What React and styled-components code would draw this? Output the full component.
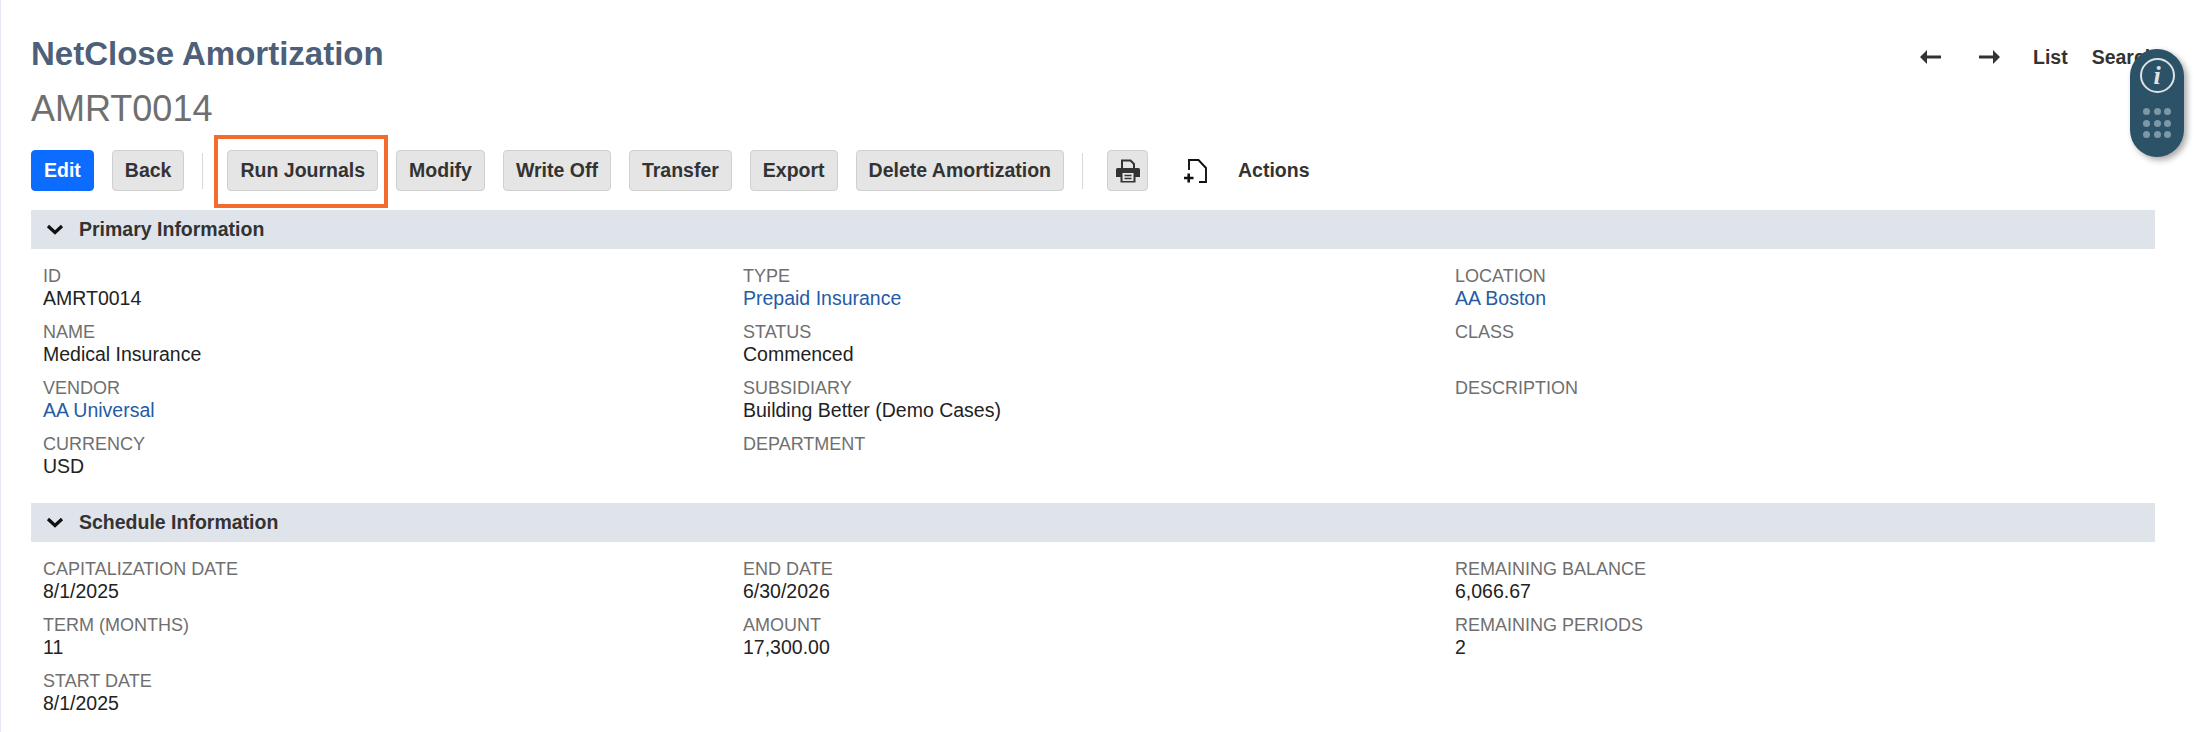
import React from "react";
import styled, { createGlobalStyle } from "styled-components";

const Global = createGlobalStyle`
  html, body { margin: 0; padding: 0; background: #fff; }
  body { font-family: "Liberation Sans", Arial, sans-serif; color: #222; overflow: hidden; }
`;
const Page = styled.div`
  position: relative;
  width: 2199px;
  height: 732px;
  box-sizing: border-box;
  padding: 0 44px 0 31px;
  overflow: hidden;
  &::before { content: ""; position: absolute; left: 0; top: 0; bottom: 0; width: 1px; background: #e4e8f0; }
`;
const Header = styled.header`
  display: flex;
  justify-content: space-between;
  align-items: flex-start;
  height: 150px;
  padding-top: 35px;
  box-sizing: border-box;
`;
const Titles = styled.div`display: flex; flex-direction: column;`;
const Title = styled.h1`
  margin: 0;
  font-size: 33px;
  line-height: 38px;
  font-weight: 700;
  color: #4d5f79;
`;
const RecordId = styled.div`
  margin-top: 15px;
  font-size: 36px;
  line-height: 42px;
  color: #6f6f6f;
`;
const Nav = styled.nav`
  display: flex;
  align-items: center;
  margin-top: 10px;
  margin-right: -18px;
  width: 253px;
  height: 24px;
  font-size: 19.5px;
  font-weight: 700;
  color: #333;
  white-space: nowrap;
`;
const NavArrow = styled.svg`width: 21px; height: 14px; flex: none; margin-right: ${(p) => p.$mr}px;`;
const NavLink = styled.span`margin-right: ${(p) => p.$mr}px;`;
const Toolbar = styled.div`
  display: flex;
  align-items: center;
  height: 41px;
`;
const Button = styled.button`
  height: 41px;
  box-sizing: border-box;
  padding: 0 12px;
  margin-right: 18px;
  border: 1px solid ${(p) => (p.$primary ? "#0b6cff" : "#d0d0d0")};
  border-radius: 4px;
  background: ${(p) => (p.$primary ? "#0b6cff" : "#e5e5e5")};
  color: ${(p) => (p.$primary ? "#fff" : "#333")};
  font: 700 19.5px "Liberation Sans", Arial, sans-serif;
  display: flex;
  align-items: center;
  justify-content: center;
  flex: none;
`;
const IconButton = styled(Button)`
  width: 41px;
  padding: 0;
  margin-right: 36px;
`;
const Divider = styled.span`
  width: 1px;
  height: 36px;
  background: #d8d8d8;
  flex: none;
  margin-right: 24px;
`;
const Highlight = styled.span`
  position: absolute;
  left: 214px;
  top: 135px;
  width: 174px;
  height: 73px;
  box-sizing: border-box;
  border: 4px solid #f26b2f;
  pointer-events: none;
`;
const IconSlot = styled.span`
  display: flex;
  width: 23px;
  height: 24px;
  margin-right: 31px;
  flex: none;
`;
const ActionsLabel = styled.span`
  font-size: 19.5px;
  font-weight: 700;
  color: #333;
`;
const SectionBar = styled.div`
  display: flex;
  align-items: center;
  height: 39px;
  margin-top: ${(p) => p.$mt}px;
  background: #dfe4eb;
  padding-left: 15px;
  font-size: 19.5px;
  font-weight: 700;
  color: #333;
`;
const Chevron = styled.svg`width: 18px; height: 11px; margin-right: 15px; flex: none;`;
const Grid = styled.div`
  display: grid;
  grid-template-columns: 700px 712px 1fr;
  padding: 14px 0 0 12px;
`;
const Column = styled.div`display: flex; flex-direction: column;`;
const Field = styled.div`height: 56px; box-sizing: border-box; padding-top: 2px;`;
const Label = styled.div`
  font-size: 18px;
  line-height: 22px;
  color: #6f6f6f;
`;
const Value = styled.div`
  font-size: 19.5px;
  line-height: 23px;
  color: ${(p) => (p.$link ? "#255ba6" : "#222")};
`;
const Floating = styled.div`
  position: absolute;
  left: 2130px;
  top: 49px;
  width: 54px;
  height: 108px;
  border-radius: 27px;
  background: #2b5266;
  box-shadow: 3px 3px 6px rgba(0, 0, 0, 0.35);
  display: flex;
  flex-direction: column;
  align-items: center;
  padding-top: 9px;
  box-sizing: border-box;
`;
const InfoRing = styled.span`
  width: 35px;
  height: 35px;
  box-sizing: border-box;
  border: 2.5px solid #dbe3e7;
  border-radius: 50%;
  display: flex;
  align-items: center;
  justify-content: center;
  color: #dbe3e7;
  font: italic 700 26px "Liberation Serif", serif;
`;
const Dots = styled.div`
  display: grid;
  grid-template-columns: repeat(3, 7px);
  column-gap: 3.5px;
  row-gap: 4.5px;
  margin-top: 15px;
`;
const Dot = styled.span`
  width: 7px;
  height: 7px;
  border-radius: 50%;
  background: #7c98a6;
`;

const columns = [
  [
    [["ID", "AMRT0014"], ["NAME", "Medical Insurance"], ["VENDOR", "AA Universal", true], ["CURRENCY", "USD"]],
    [["TYPE", "Prepaid Insurance", true], ["STATUS", "Commenced"], ["SUBSIDIARY", "Building Better (Demo Cases)"], ["DEPARTMENT", ""]],
    [["LOCATION", "AA Boston", true], ["CLASS", ""], ["DESCRIPTION", ""]],
  ],
  [
    [["CAPITALIZATION DATE", "8/1/2025"], ["TERM (MONTHS)", "11"], ["START DATE", "8/1/2025"]],
    [["END DATE", "6/30/2026"], ["AMOUNT", "17,300.00"]],
    [["REMAINING BALANCE", "6,066.67"], ["REMAINING PERIODS", "2"]],
  ],
];

const Fields = ({ data }) => (
  <Grid>
    {data.map((col, i) => (
      <Column key={i}>
        {col.map(([l, v, link]) => (
          <Field key={l}>
            <Label>{l}</Label>
            <Value $link={link}>{v}</Value>
          </Field>
        ))}
      </Column>
    ))}
  </Grid>
);

const Down = () => (
  <Chevron viewBox="0 0 18 11">
    <path d="M2 2l7 6.5L16 2" fill="none" stroke="#111" strokeWidth="3.2" />
  </Chevron>
);

export default function App() {
  return (
    <Page>
      <Global />
      <Header>
        <Titles>
          <Title>NetClose Amortization</Title>
          <RecordId>AMRT0014</RecordId>
        </Titles>
        <Nav>
          <NavArrow viewBox="0 0 21 14" $mr={38}>
            <path d="M0 7l7-7v5.500h14v3H7V14z" fill="#333" />
          </NavArrow>
          <NavArrow viewBox="0 0 21 14" $mr={33}>
            <path d="M21 7l-7-7v5.500H0v3h14V14z" fill="#333" />
          </NavArrow>
          <NavLink $mr={24}>List</NavLink>
          <NavLink $mr={0}>Search</NavLink>
        </Nav>
      </Header>
      <Toolbar>
        <Button $primary>Edit</Button>
        <Button>Back</Button>
        <Divider />
        <Button>Run Journals</Button>
        <Button>Modify</Button>
        <Button>Write Off</Button>
        <Button>Transfer</Button>
        <Button>Export</Button>
        <Button>Delete Amortization</Button>
        <Divider />
        <IconButton>
          <svg width="24" height="24" viewBox="0 0 24 24">
            <path d="M6 10V1.500h8.500l3.500 3.500V10" fill="none" stroke="#333" strokeWidth="2" />
            <path d="M1.500 9h21A1.500 1.500 0 0 1 24 10.500V18h-4.500v5.500h-15V18H0v-7.500A1.500 1.500 0 0 1 1.500 9z" fill="#333" />
            <path d="M6.500 14h11v8h-11z" fill="#e5e5e5" />
            <path d="M8.500 16.500h7M8.500 19.500h7" stroke="#333" strokeWidth="1.300" />
          </svg>
        </IconButton>
        <IconSlot>
          <svg width="23" height="24" viewBox="0 0 23 24">
            <path d="M5 11V1h9.500l7.500 8v14h-7" fill="none" stroke="#111" strokeWidth="1.900" />
            <path d="M0 19h9.500M4.700 14.500v9" fill="none" stroke="#111" strokeWidth="2.600" />
          </svg>
        </IconSlot>
        <ActionsLabel>Actions</ActionsLabel>
      </Toolbar>
      <Highlight />
      <SectionBar $mt={19}><Down />Primary Information</SectionBar>
      <Fields data={columns[0]} />
      <SectionBar $mt={16}><Down />Schedule Information</SectionBar>
      <Fields data={columns[1]} />
      <Floating>
        <InfoRing>i</InfoRing>
        <Dots>{Array.from({ length: 9 }, (_, i) => <Dot key={i} />)}</Dots>
      </Floating>
    </Page>
  );
}
